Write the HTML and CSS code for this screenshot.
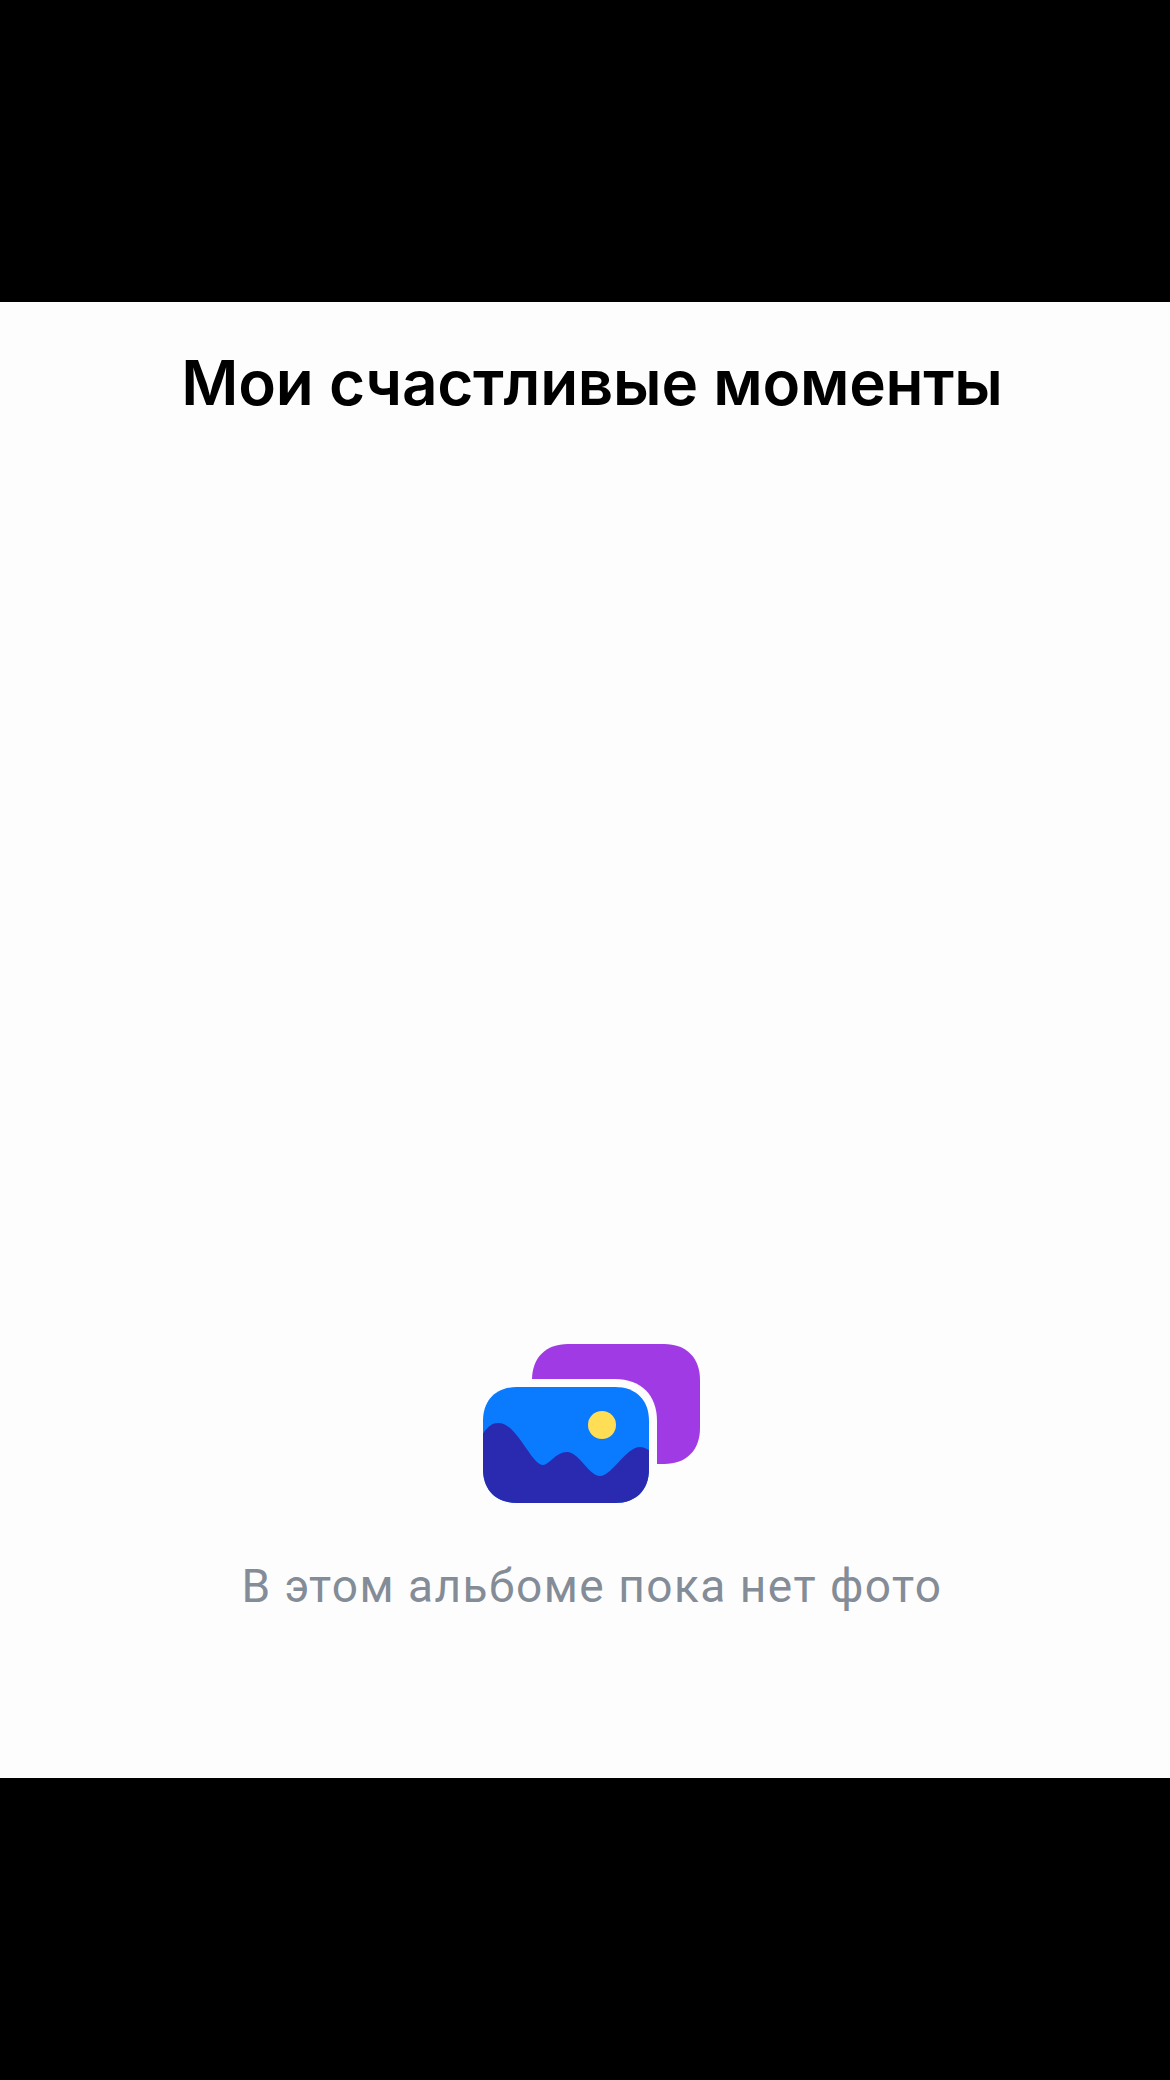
FILE: index.html
```html
<!DOCTYPE html>
<html lang="ru">
<head>
<meta charset="utf-8">
<title>Мои счастливые моменты</title>
<link rel="stylesheet" href="styles.css">
</head>
<body>
<div class="bar bar-top"></div>
<main class="sheet">
  <h1 class="title">Мои счастливые моменты</h1>
  <section class="empty">
    <svg class="empty-icon" viewBox="467 1340 250 175" width="250" height="175" aria-hidden="true">
      <defs>
        <clipPath id="card"><path d="M517 1387H615C636 1387 649 1400 649 1421V1469C649 1490 636 1503 615 1503H517C496 1503 483 1490 483 1469V1421C483 1400 496 1387 517 1387Z"/></clipPath>
      </defs>
      <path d="M568 1344H664C686.3 1344 700 1357.7 700 1380V1428C700 1450.3 686.3 1464 664 1464H568C545.7 1464 532 1450.3 532 1428V1380C532 1357.7 545.7 1344 568 1344Z" fill="#9f3ae4"/>
      <path d="M512 1379H615C641 1379 657 1395 657 1421V1472C657 1498 641 1514 615 1514H512C486 1514 470 1498 470 1472V1421C470 1395 486 1379 512 1379Z" fill="#fdfdfd"/>
      <path d="M517 1387H615C636 1387 649 1400 649 1421V1469C649 1490 636 1503 615 1503H517C496 1503 483 1490 483 1469V1421C483 1400 496 1387 517 1387Z" fill="#0a7bff"/>
      <g clip-path="url(#card)">
        <path d="M478 1441C486 1428 491 1423 498 1423C509 1423 517 1435 526 1448C533 1458 538 1465 543 1465C549 1465 556 1452 567 1452C579 1452 589 1476 600 1476C612 1476 626 1447 640 1447C646 1447 652 1452 655 1456V1510H478Z" fill="#2a2ab0"/>
      </g>
      <circle cx="602" cy="1425" r="14" fill="#ffdd55"/>
    </svg>
    <p class="empty-text">В этом альбоме пока нет фото</p>
  </section>
</main>
<div class="bar bar-bottom"></div>
</body>
</html>
```

FILE: styles.css
```css
html, body {
  margin: 0;
  padding: 0;
  background: #000;
}

body {
  width: 1170px;
  height: 2080px;
  display: flex;
  flex-direction: column;
  overflow: hidden;
}

.bar-top {
  height: 302px;
  flex: none;
}

.bar-bottom {
  flex: 1;
}

.sheet {
  height: 1476px;
  flex: none;
  box-sizing: border-box;
  padding-left: 14px;
  background: #fdfdfd;
  display: flex;
  flex-direction: column;
  align-items: center;
}

.title {
  margin: 41px 0 0;
  font: 600 62px/80px Inter, "Noto Sans", sans-serif;
  letter-spacing: -0.25px;
  color: #000;
}

.empty {
  margin-top: 917px;
  display: flex;
  flex-direction: column;
  align-items: center;
}

.empty-icon {
  display: block;
}

.empty-text {
  margin: 41px 0 0;
  font: 400 46px/60px Roboto, "Noto Sans", sans-serif;
  letter-spacing: 1.5px;
  color: #838c97;
}
```
